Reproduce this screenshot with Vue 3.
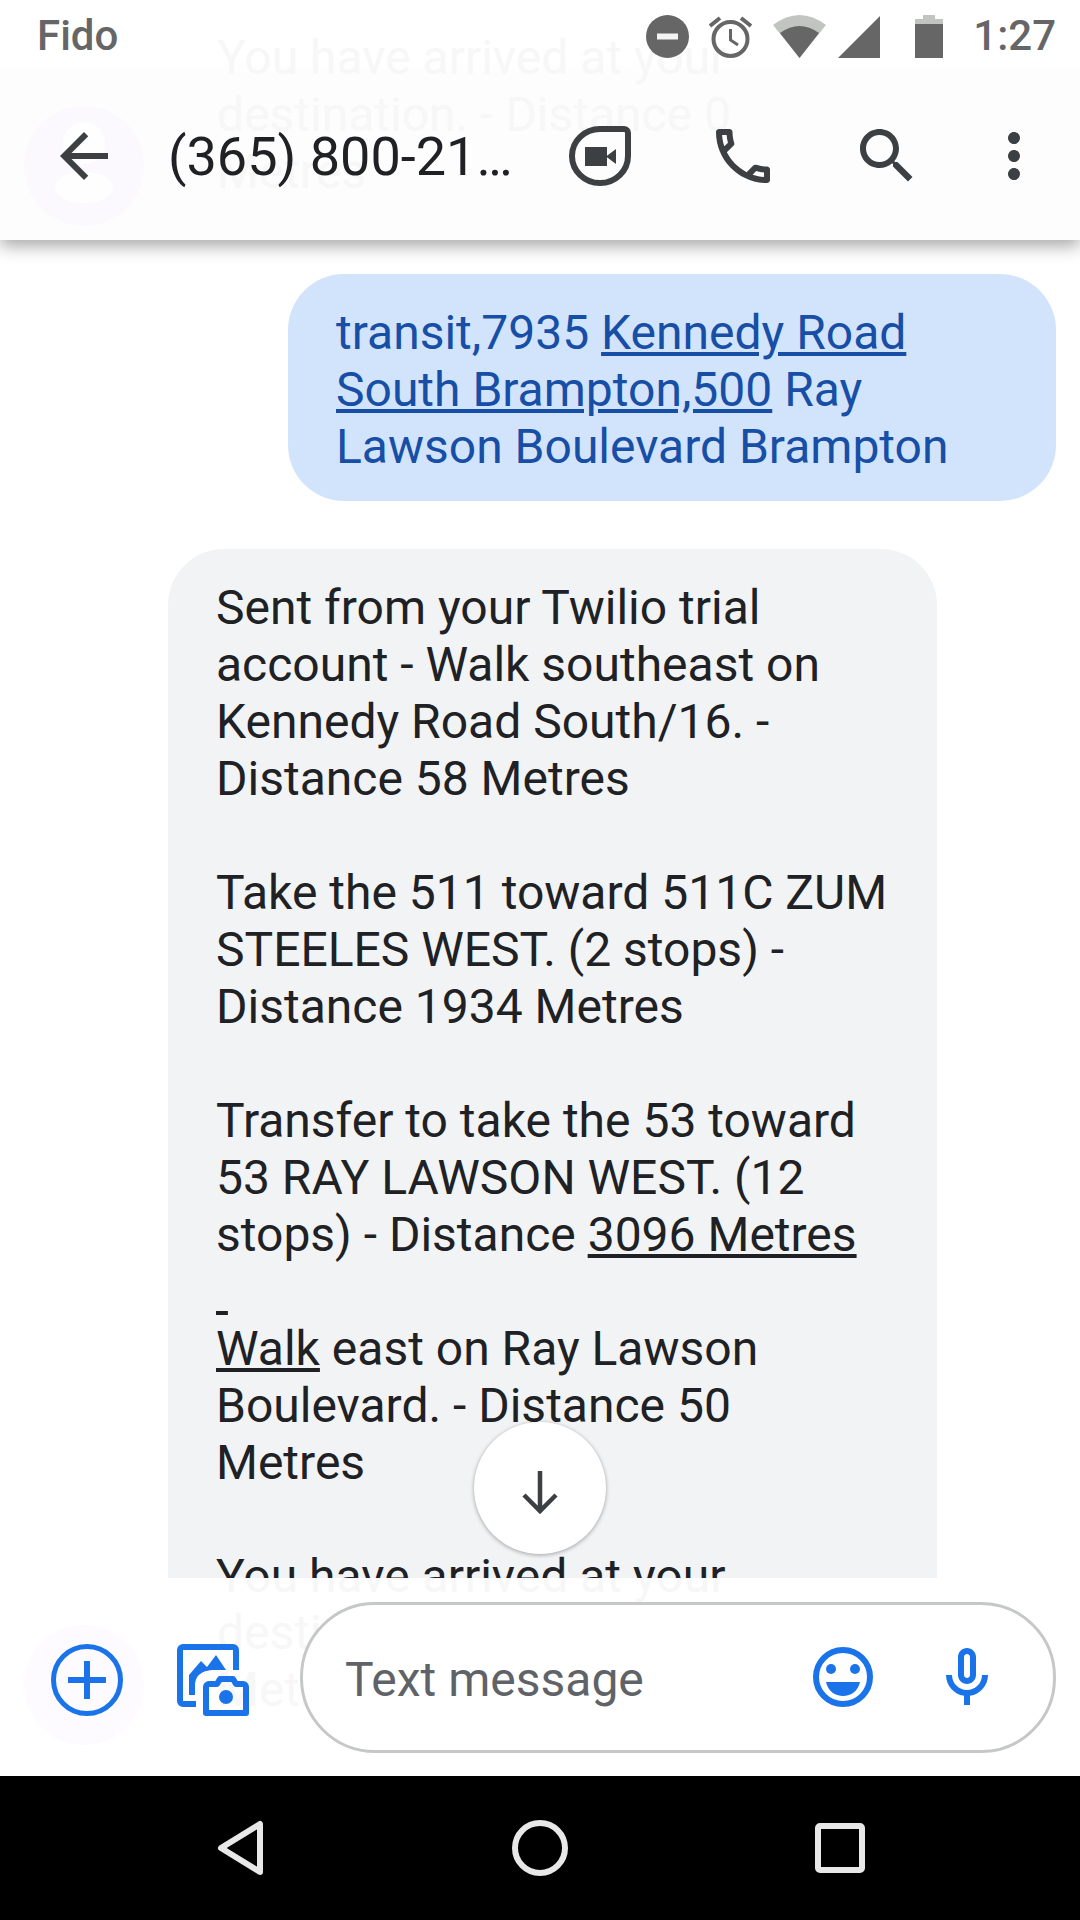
<template>
  <div class="screen">
    <header class="top">
      <div class="ghost ghost-top">You have arrived at your<br />destination. - Distance 0<br />Metres</div>
      <div class="ghost-avatar">
        <span class="ghost-head"></span>
        <span class="ghost-body"></span>
      </div>

      <div class="status">
        <span class="carrier">Fido</span>
        <div class="status-right">
          <svg class="dnd" width="43" height="43" viewBox="0 0 43 43">
            <circle cx="21.5" cy="21.5" r="21.5" fill="#666" />
            <rect x="11" y="18.5" width="21" height="6" fill="#f4f4f4" />
          </svg>
          <svg class="alarm" width="43" height="43" viewBox="0 0 43 43">
            <circle cx="21.5" cy="24" r="17" fill="none" stroke="#666" stroke-width="4" />
            <path d="M21.500 14V25L29 30" fill="none" stroke="#666" stroke-width="3" />
            <path d="M1 11L11 3M42 11L32 3" fill="none" stroke="#666" stroke-width="4" />
          </svg>
          <svg class="wifi" width="53" height="43" viewBox="0 0 53 43">
            <path d="M0 10Q26.500 -10 53 10L26.500 43Z" fill="#c2c4c2" />
            <path d="M7 18Q26.500 4 46 18L26.500 43Z" fill="#666" />
          </svg>
          <svg class="signal" width="42" height="42" viewBox="0 0 42 42">
            <path d="M42 0V42H0Z" fill="#666" />
          </svg>
          <svg class="battery" width="28" height="43" viewBox="0 0 28 43">
            <path d="M8 0H20V4H28V9H0V4H8Z" fill="#c2c4c2" />
            <rect y="9" width="28" height="34" fill="#666" />
          </svg>
          <span class="time">1:27</span>
        </div>
      </div>

      <div class="bar">
        <svg class="back" width="72" height="72" viewBox="0 0 24 24">
          <path d="M20 11H7.830l5.590-5.590L12 4l-8 8 8 8 1.410-1.410L7.830 13H20v-2z" />
        </svg>
        <span class="title">(365) 800-21…</span>
        <svg class="duo" width="72" height="72" viewBox="0 0 72 72">
          <path d="M36 9H60a4 4 0 0 1 4 4V36A28 27 0 1 1 36 9Z" fill="none" stroke="#3c4043" stroke-width="6" />
          <rect x="21" y="27" width="22" height="19" />
          <path d="M42 36.500L52 29V44Z" />
        </svg>
        <svg class="phone" width="72" height="72" viewBox="0 0 24 24">
          <path d="M6.540 5c.06.89.21 1.760.45 2.590l-1.200 1.200c-.41-1.200-.67-2.470-.76-3.790h1.510m9.860 12.020c.85.24 1.720.39 2.600.45v1.490c-1.320-.09-2.590-.35-3.800-.75l1.200-1.190M7.500 3H4c-.55 0-1 .45-1 1 0 9.390 7.610 17 17 17 .55 0 1-.45 1-1v-3.490c0-.55-.45-1-1-1-1.240 0-2.450-.2-3.570-.57-.1-.04-.21-.05-.31-.05-.26 0-.51.1-.71.29l-2.200 2.200c-2.830-1.450-5.150-3.760-6.590-6.590l2.200-2.200c.28-.28.36-.67.25-1.020C8.700 6.450 8.500 5.250 8.500 4c0-.55-.45-1-1-1z" />
        </svg>
        <svg class="search" width="72" height="72" viewBox="0 0 24 24">
          <path d="M15.500 14h-.79l-.28-.27C15.410 12.590 16 11.110 16 9.500 16 5.910 13.090 3 9.500 3S3 5.910 3 9.500 5.910 16 9.500 16c1.610 0 3.090-.59 4.230-1.570l.27.28v.79l5 4.990L20.490 19l-4.990-5zm-6 0C7.010 14 5 11.990 5 9.500S7.010 5 9.500 5 14 7.010 14 9.500 11.990 14 9.500 14z" />
        </svg>
        <svg class="more" width="72" height="72" viewBox="0 0 24 24">
          <path d="M12 8c1.100 0 2-.9 2-2s-.9-2-2-2-2 .9-2 2 .9 2 2 2zm0 2c-1.100 0-2 .9-2 2s.9 2 2 2 2-.9 2-2-.9-2-2-2zm0 6c-1.100 0-2 .9-2 2s.9 2 2 2 2-.9 2-2-.9-2-2-2z" />
        </svg>
      </div>
    </header>

    <main class="messages">
      <div class="bubble sent">
        transit,7935 <u>Kennedy Road</u><br />
        <u>South Brampton,500</u> Ray<br />
        Lawson Boulevard Brampton
      </div>
      <div class="bubble received">
        Sent from your Twilio trial<br />
        account - Walk southeast on<br />
        Kennedy Road South/16. -<br />
        Distance 58 Metres<br />
        <br />
        Take the 511 toward 511C ZUM<br />
        STEELES WEST. (2 stops) -<br />
        Distance 1934 Metres<br />
        <br />
        Transfer to take the 53 toward<br />
        53 RAY LAWSON WEST. (12<br />
        stops) - Distance <u>3096 Metres</u><br />
        <u>&nbsp;</u><br />
        <u>Walk</u> east on Ray Lawson<br />
        Boulevard. - Distance 50<br />
        Metres<br />
        <br />
        You have arrived at your<br />
        destination. - Distance 0<br />
        Metres
      </div>
    </main>

    <button class="scroll-down">
      <svg width="72" height="72" viewBox="0 0 72 72">
        <path d="M36 19V59M20 43L36 59L52 43" fill="none" stroke="#3c4043" stroke-width="4.500" />
      </svg>
    </button>

    <footer class="composer">
      <div class="ghost ghost-bottom">You have arrived at your<br />destination. - Distance 0<br />Metres</div>
      <div class="ghost-plus"></div>

      <svg class="plus" width="72" height="72" viewBox="0 0 72 72">
        <circle cx="36" cy="36" r="33.500" fill="none" stroke="#1a73e8" stroke-width="5" />
        <path d="M36 17V55M17 36H55" fill="none" stroke="#1a73e8" stroke-width="6" />
      </svg>
      <svg class="gallery" width="72" height="72" viewBox="0 0 72 72">
        <path d="M19 60H6a3 3 0 0 1-3-3V6a3 3 0 0 1 3-3H56a3 3 0 0 1 3 3V26" fill="none" stroke="#1a73e8" stroke-width="6" />
        <path d="M12 51V31L24 17L30 23L39 11L49 26H38C30 26 18 28 18 42V51Z" fill="#1a73e8" />
        <path d="M29 69V43a3 3 0 0 1 3-3H40L43 35H56L59 40H66a3 3 0 0 1 3 3V69Z" fill="none" stroke="#1a73e8" stroke-width="6" stroke-linejoin="round" />
        <circle cx="49" cy="53" r="7" fill="#1a73e8" />
      </svg>
      <div class="field">
        <span class="placeholder">Text message</span>
        <svg class="emoji" width="60" height="60" viewBox="0 0 60 60">
          <circle cx="30" cy="30" r="27" fill="none" stroke="#1a73e8" stroke-width="6" />
          <circle cx="18" cy="22" r="5" fill="#1a73e8" />
          <circle cx="42" cy="22" r="5" fill="#1a73e8" />
          <path d="M13 35H47C45 44 38 49 30 49S15 44 13 35Z" fill="#1a73e8" />
        </svg>
        <svg class="mic" width="72" height="72" viewBox="0 0 24 24">
          <path d="M12 14c1.660 0 3-1.340 3-3V5c0-1.660-1.340-3-3-3S9 3.340 9 5v6c0 1.660 1.340 3 3 3zm-1-9c0-.55.45-1 1-1s1 .45 1 1v6c0 .55-.45 1-1 1s-1-.45-1-1V5zm6 6c0 2.760-2.240 5-5 5s-5-2.240-5-5H5c0 3.530 2.610 6.430 6 6.920V21h2v-3.080c3.390-.49 6-3.390 6-6.920h-2z" />
        </svg>
      </div>
    </footer>

    <nav class="nav">
      <svg width="60" height="60" viewBox="0 0 60 60">
        <path d="M50 6V54L11 30Z" fill="none" stroke="#e8e8e8" stroke-width="6" stroke-linejoin="round" />
      </svg>
      <svg width="60" height="60" viewBox="0 0 60 60">
        <circle cx="30" cy="30" r="25" fill="none" stroke="#e8e8e8" stroke-width="6" />
      </svg>
      <svg width="60" height="60" viewBox="0 0 60 60">
        <rect x="8" y="8" width="44" height="44" rx="2" fill="none" stroke="#e8e8e8" stroke-width="6" />
      </svg>
    </nav>
  </div>
</template>

<script setup>
</script>

<style>
html,
body {
  margin: 0;
  background: #fff;
}
</style>

<style scoped>
.screen {
  position: relative;
  display: flex;
  flex-direction: column;
  width: 1080px;
  height: 1920px;
  overflow: hidden;
  background: #fff;
  font-family: Roboto, "Liberation Sans", sans-serif;
  color: #202124;
}

.top {
  position: relative;
  z-index: 2;
  flex: none;
  height: 240px;
  background: linear-gradient(to bottom, #fff 55px, #fdfdfd 75px);
  box-shadow: 0 6px 16px rgba(0, 0, 0, 0.35);
}

.ghost {
  position: absolute;
  left: 217px;
  font-size: 48px;
  line-height: 57px;
  color: #f7f7f7;
  white-space: nowrap;
}

.ghost-top {
  top: 29px;
}

.ghost-bottom {
  top: -31px;
}

.ghost-avatar {
  position: absolute;
  left: 24px;
  top: 106px;
  width: 120px;
  height: 120px;
  border-radius: 50%;
  background: #fbf9fe;
  overflow: hidden;
}

.ghost-head {
  position: absolute;
  left: 39px;
  top: 16px;
  width: 42px;
  height: 42px;
  border-radius: 50%;
  background: #fefefe;
}

.ghost-body {
  position: absolute;
  left: 31px;
  top: 66px;
  width: 58px;
  height: 31px;
  border-radius: 50%;
  background: #fefefe;
}

.status {
  position: relative;
  display: flex;
  align-items: center;
  justify-content: space-between;
  height: 60px;
  padding: 13px 24px 0 37px;
  box-sizing: border-box;
  font-size: 42px;
  font-weight: 500;
  color: #666;
}

.carrier,
.time {
  position: relative;
  top: -1px;
}

.status-right {
  display: flex;
  align-items: center;
}

.alarm {
  margin-left: 20px;
}

.wifi {
  margin-left: 21px;
}

.signal {
  margin-left: 12px;
}

.battery {
  margin-left: 35px;
}

.time {
  margin-left: 30px;
}

.bar {
  position: relative;
  display: flex;
  align-items: center;
  height: 180px;
  padding: 12px 0 0 48px;
  box-sizing: border-box;
  fill: #3c4043;
}

.title {
  width: 396px;
  margin-left: 48px;
  font-size: 54px;
  white-space: nowrap;
}

.phone {
  margin-left: 71px;
}

.search {
  margin-left: 72px;
}

.more {
  margin-left: 55px;
}

.messages {
  flex: 1;
  min-height: 0;
  display: flex;
  flex-direction: column;
  gap: 48px;
  padding-top: 34px;
  overflow: hidden;
}

.bubble {
  flex: none;
  box-sizing: border-box;
  padding: 30px 48px 26px;
  border-radius: 56px;
  font-size: 48px;
  line-height: 57px;
  white-space: nowrap;
}

.sent {
  align-self: flex-end;
  width: 768px;
  margin-right: 24px;
  background: #d2e3fc;
  color: #174ea6;
}

.received {
  width: 769px;
  margin-left: 168px;
  background: #f1f3f4;
}

.scroll-down {
  position: absolute;
  z-index: 1;
  left: 474px;
  top: 1422px;
  display: flex;
  align-items: center;
  justify-content: center;
  width: 132px;
  height: 132px;
  padding: 0;
  border: none;
  border-radius: 50%;
  background: #fff;
  box-shadow: 0 1px 4px rgba(0, 0, 0, 0.35);
}

.composer {
  position: relative;
  flex: none;
  display: flex;
  align-items: flex-start;
  height: 198px;
  padding: 24px 0 0 51px;
  box-sizing: border-box;
  overflow: hidden;
  background: #fff;
}

.ghost-plus {
  position: absolute;
  left: 24px;
  top: 47px;
  width: 120px;
  height: 120px;
  border-radius: 50%;
  background: #fdfbff;
}

.plus {
  position: relative;
  flex: none;
  margin-top: 42px;
}

.gallery {
  position: relative;
  flex: none;
  margin: 42px 0 0 54px;
}

.field {
  position: relative;
  display: flex;
  align-items: center;
  width: 756px;
  height: 151px;
  margin-left: 51px;
  padding-left: 42px;
  box-sizing: border-box;
  border: 3px solid #c6c8c8;
  border-radius: 75px;
  background: #fff;
}

.placeholder {
  margin-top: 4px;
  font-size: 48px;
  color: #5f6368;
}

.emoji {
  margin-left: auto;
  margin-top: -2px;
}

.mic {
  margin: 0 50px 0 58px;
  fill: #1a73e8;
}

.nav {
  flex: none;
  display: flex;
  align-items: center;
  justify-content: space-between;
  height: 144px;
  padding: 0 210px;
  background: #000;
}
</style>
